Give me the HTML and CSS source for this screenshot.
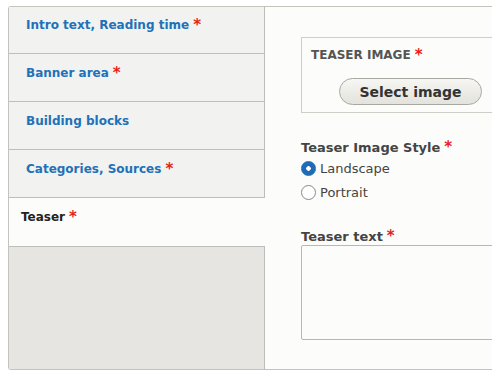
FILE: index.html
```html
<!DOCTYPE html>
<html>
<head>
    <title>Edit Article</title>
    <link rel="stylesheet" href="styles.css">
</head>
<body>
    <div class="vertical-tabs">
        <ul class="tab-list">
            <li class="tab"><a href="#">Intro text, Reading time</a><span class="req">*</span></li>
            <li class="tab"><a href="#">Banner area</a><span class="req">*</span></li>
            <li class="tab"><a href="#">Building blocks</a></li>
            <li class="tab"><a href="#">Categories, Sources</a><span class="req">*</span></li>
            <li class="tab active"><a href="#">Teaser</a><span class="req">*</span></li>
        </ul>

        <div class="tab-pane">
            <fieldset class="image-field">
                <div class="field-title">TEASER IMAGE<span class="req">*</span></div>
                <button type="button" class="button">Select image</button>
            </fieldset>

            <div class="form-item">
                <label class="label">Teaser Image Style<span class="req">*</span></label>
                <label class="radio"><span class="radio-mark checked"></span>Landscape</label>
                <label class="radio"><span class="radio-mark"></span>Portrait</label>
            </div>

            <div class="form-item">
                <label class="label">Teaser text<span class="req">*</span></label>
                <textarea class="textarea"></textarea>
            </div>
        </div>
    </div>
</body>
</html>
```

FILE: styles.css
```css
/* Vertical tabs edit form */

body {
    font-family: "DejaVu Sans", sans-serif;
    background-color: #fff;
    margin: 0;
    padding: 6px 0 0 8px;
    overflow: hidden;
}

.vertical-tabs {
    display: grid;
    grid-template-columns: 256px 1fr;
    width: 520px;
    height: 362px;
    border: 1px solid #c4c4bf;
    border-right: none;
    border-radius: 3px 0 0 3px;
    background-color: #fcfcfa;
}

.tab-list {
    list-style: none;
    margin: 0;
    padding: 0;
    background-color: #e6e5e1;
    border-right: 1px solid #bdbdb8;
}

.tab {
    height: 48px;
    box-sizing: border-box;
    padding: 12px 0 0 17px;
    background-color: #f2f2f0;
    border-bottom: 1px solid #bfbfba;
    font-size: 12px;
    font-weight: bold;
}

.tab:first-child {
    height: 47px;
    padding-top: 11px;
}

.tab a {
    color: #1f71b8;
    text-decoration: none;
}

.tab.active {
    background-color: #fcfcfa;
    margin-right: -1px;
    height: 49px;
    padding-left: 12px;
}

.tab.active a {
    color: #222;
}

.req {
    color: #e6231b;
    font-weight: bold;
    font-size: 15px;
    line-height: 1;
    vertical-align: top;
    margin-left: 4px;
}

.tab-pane {
    padding: 30px 0 0 36px;
}

.image-field {
    margin: 0;
    padding: 10px 0 0 9px;
    height: 76px;
    box-sizing: border-box;
    border: 1px solid #cfcfca;
    border-right: none;
}

.field-title {
    font-size: 12px;
    font-weight: bold;
    color: #555;
}

.button {
    display: block;
    margin: 15px 0 0 28px;
    width: 143px;
    height: 27px;
    border: 1px solid #a8a8a3;
    border-radius: 14px;
    background: linear-gradient(#f6f6f3, #e3e2dc);
    font-family: inherit;
    font-size: 14px;
    font-weight: bold;
    color: #333;
}

.form-item {
    margin-top: 27px;
}

.label {
    display: block;
    font-size: 13px;
    font-weight: bold;
    color: #444;
    margin-bottom: 1px;
}

.radio {
    display: flex;
    align-items: center;
    height: 24px;
    font-size: 13px;
    color: #444;
}

.radio-mark {
    width: 13px;
    height: 13px;
    border: 1px solid #888;
    border-radius: 50%;
    background-color: #fff;
    margin-right: 4px;
    box-sizing: content-box;
}

.radio-mark.checked {
    border-color: #1f6bb5;
    background: radial-gradient(circle, #fff 0 2px, #1f6bb5 2.5px);
}

.form-item + .form-item {
    margin-top: 25px;
}

.textarea {
    display: block;
    width: 400px;
    height: 93px;
    margin: 0;
    padding: 0;
    border: 1px solid #b8b8b3;
    border-radius: 2px;
    background-color: #fcfcfa;
}
```
